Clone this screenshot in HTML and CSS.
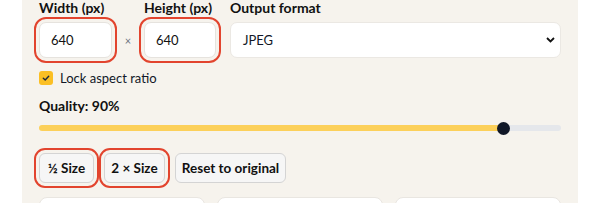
FILE: index.html
```html
<!DOCTYPE html>
<html>
<head>
<meta charset="utf-8">
<link rel="stylesheet" href="styles.css">
</head>
<body>
<div class="panel">
  <div class="dims">
    <label class="lbl">Width (px)</label>
    <span></span>
    <label class="lbl">Height (px)</label>
    <label class="lbl">Output format</label>
    <input class="num hl" type="text" value="640">
    <span class="times">×</span>
    <input class="num hl" type="text" value="640">
    <div class="select">
      <span>JPEG</span>
      <svg width="9" height="6" viewBox="0 0 9 6"><path d="M1 1 L4.5 4.5 L8 1" fill="none" stroke="#111" stroke-width="1.8"/></svg>
    </div>
  </div>
  <div class="lock">
    <span class="box"><svg width="10" height="10" viewBox="0 0 10 10"><path d="M2.3 5.2 L4.2 7 L7.7 3.2" fill="none" stroke="#1f2937" stroke-width="1.4" stroke-linecap="round" stroke-linejoin="round"/></svg></span>
    <span>Lock aspect ratio</span>
  </div>
  <div class="lbl qlbl">Quality: 90%</div>
  <input class="range" type="range" min="0" max="100" value="90">
  <div class="btns">
    <button class="btn hl b1">½ Size</button>
    <button class="btn hl b2">2 × Size</button>
    <button class="btn b3">Reset to original</button>
  </div>
  <div class="cards">
    <div class="card"></div>
    <div class="card"></div>
    <div class="card"></div>
  </div>
</div>
</body>
</html>
```
FILE: styles.css
```css
html, body {
  margin: 0;
  padding: 0;
  background: #ffffff;
  font-family: Lato, "Noto Sans", sans-serif;
  color: #111827;
  overflow: hidden;
}
.panel {
  margin-left: 22px;
  width: 556px;
  height: 203px;
  box-sizing: border-box;
  padding: 0 17px;
  background: #f6f3ed;
  overflow: hidden;
}
.dims {
  display: grid;
  grid-template-columns: 73px 4px 72px 1fr;
  column-gap: 14px;
  row-gap: 6px;
  align-items: center;
}
.lbl {
  font-size: 14px;
  font-weight: 700;
  line-height: 16px;
  color: #111;
}
.num {
  box-sizing: border-box;
  width: 100%;
  height: 36px;
  border: 1px solid #e6e3de;
  border-radius: 7px;
  background: #fff;
  padding: 0 0 0 11px;
  font-family: Lato, sans-serif;
  font-size: 13px;
  color: #111;
  outline: none;
}
.hl {
  outline: 2px solid #e2442e !important;
  outline-offset: 3px;
}
.times {
  font-size: 11px;
  color: #6b7280;
  text-align: center;
  display: flex;
  justify-content: center;
}
.select {
  box-sizing: border-box;
  height: 36px;
  background: #fff;
  border: 1px solid #ebe8e3;
  border-radius: 7px;
  display: flex;
  align-items: center;
  justify-content: space-between;
  padding: 0 5px 0 12px;
  font-size: 13px;
}
.lock {
  margin-top: 10px;
  height: 20px;
  display: flex;
  align-items: center;
  gap: 7px;
  font-size: 13px;
}
.box {
  width: 14px;
  height: 14px;
  border-radius: 3px;
  background: #fbbf24;
  display: flex;
  align-items: center;
  justify-content: center;
}
.qlbl {
  margin-top: 10px;
}
.range {
  -webkit-appearance: none;
  appearance: none;
  display: block;
  width: 100%;
  margin: 7px 0 0 0;
  height: 14px;
  background: transparent;
}
.range::-webkit-slider-runnable-track {
  height: 6px;
  border-radius: 3px;
  background: linear-gradient(to right, #fcd05a 0, #fcd05a 464px, #e5e7eb 464px);
}
.range::-webkit-slider-thumb {
  -webkit-appearance: none;
  width: 13px;
  height: 13px;
  border-radius: 50%;
  background: #111827;
  margin-top: -3.5px;
  border: none;
}
.btns {
  margin-top: 18px;
  display: flex;
  gap: 10px;
}
.btn {
  box-sizing: border-box;
  height: 30px;
  padding: 0;
  border: 1px solid #d4d4d4;
  border-radius: 6px;
  background: #f6f6f6;
  font-family: Lato, sans-serif;
  font-size: 13.5px;
  font-weight: 700;
  color: #111;
  text-align: center;
}
.b1 { width: 55px; }
.b2 { width: 61px; }
.b3 { width: 111px; }
.cards {
  margin-top: 14px;
  display: grid;
  grid-template-columns: 1fr 1fr 1fr;
  gap: 12px;
}
.card {
  height: 40px;
  background: #fff;
  border: 1px solid #e9e6e1;
  border-radius: 8px;
}
```
